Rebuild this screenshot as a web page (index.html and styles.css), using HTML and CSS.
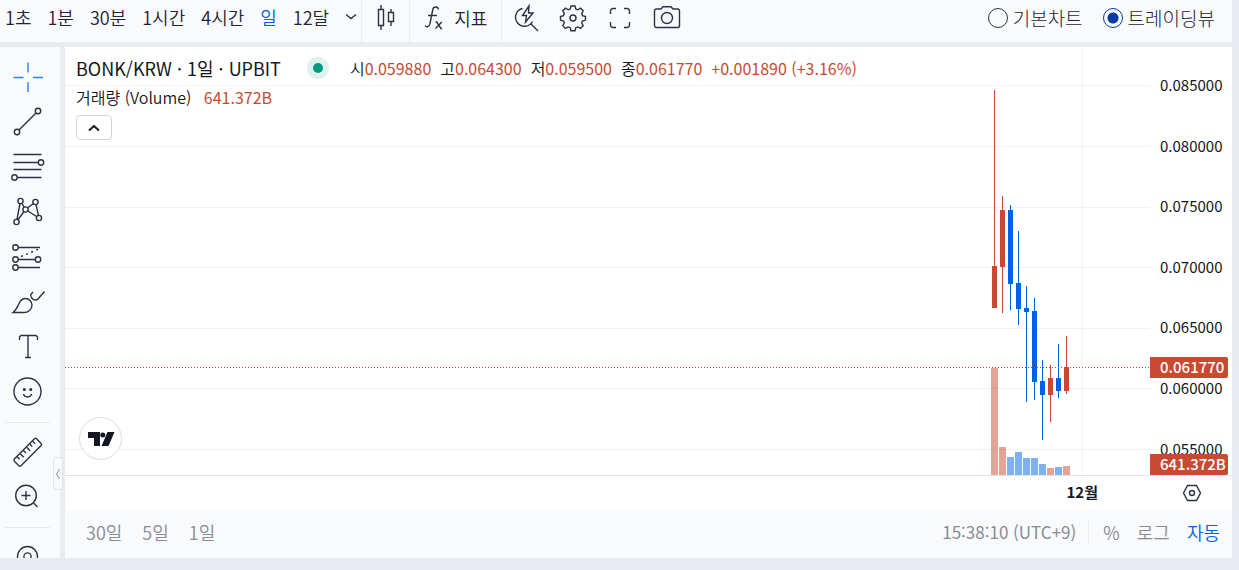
FILE: index.html
```html
<!DOCTYPE html>
<html lang="ko">
<head>
<meta charset="utf-8">
<meta name="viewport" content="width=device-width, initial-scale=1">
<title>BONK/KRW</title>
<link rel="stylesheet" href="styles.css">
</head>
<body>
<div class="app">
  <header class="toolbar">
    <div class="periods">
      <button type="button">1초</button>
      <button type="button">1분</button>
      <button type="button">30분</button>
      <button type="button">1시간</button>
      <button type="button">4시간</button>
      <button type="button" class="active">일</button>
      <button type="button">12달</button>
      <button type="button" class="more" aria-label="기간 더보기"><svg class="icon" width="12" height="8" viewBox="0 0 12 8"><path d="M1 1.500l5 4 5-4"/></svg></button>
    </div>
    <div class="group">
      <button type="button" aria-label="차트 유형"><svg class="icon" width="20" height="28" viewBox="0 0 20 28"><path d="M2.500 5.500h5v16h-5zM5 1v4.500M5 21.500V26M12.500 8.500h5v9h-5zM15 5v3.500M15 17.500V22"/></svg></button>
    </div>
    <div class="group group-wide">
      <button type="button"><svg class="icon" width="20" height="28" viewBox="0 0 20 28"><path d="M14.500 5.500c-.5-3-5-3.500-5.700 0L6 19.500C5.400 23 2 23.800 1.200 21.500M4 11.500h9M11.500 18h1.200l4.200 6.500h1.200M17.800 18l-6.300 6.500"/></svg><span>지표</span></button>
    </div>
    <div class="tools">
      <button type="button" aria-label="빠른 검색"><svg class="icon" width="28" height="28" viewBox="0 0 28 28"><path d="M10.500 4.500a9 9 0 1 0 10 13M19 20l7 7M17 2l-6.500 9.500h4L13.500 18 21 9h-4.500z"/></svg></button>
      <button type="button" aria-label="설정"><svg class="icon" width="28" height="28" viewBox="0 0 28 28"><circle cx="14" cy="14" r="3"/><path d="M12 2h4l.8 3 2 .8 2.800-1.600 2.600 2.700-1.500 2.700.8 2 3 .9v3.600l-3 .9-.8 2 1.500 2.700-2.600 2.700-2.800-1.500-2 .8-.8 3h-4l-.8-3-2-.8-2.800 1.500-2.600-2.700 1.500-2.700-.8-2-3-.9v-3.600l3-.9.8-2-1.500-2.700 2.600-2.700 2.800 1.600 2-.8z"/></svg></button>
      <button type="button" aria-label="전체 화면"><svg class="icon" width="28" height="28" viewBox="0 0 28 28"><path d="M4.500 10V7a2.500 2.500 0 0 1 2.500-2.500h3M18 4.500h3A2.500 2.500 0 0 1 23.500 7v3M23.500 18v3a2.500 2.500 0 0 1-2.500 2.500h-3M10 23.500H7A2.500 2.500 0 0 1 4.500 21v-3"/></svg></button>
      <button type="button" aria-label="스냅샷"><svg class="icon" width="28" height="28" viewBox="0 0 28 28"><path d="M3.500 5H8l2-2.200h8L20 5h4.500A2 2 0 0 1 26.500 7v14.500a2 2 0 0 1-2 2h-21a2 2 0 0 1-2-2V7a2 2 0 0 1 2-2z"/><circle cx="14" cy="14" r="5.500"/></svg></button>
    </div>
    <div class="chart-kind">
      <label><input type="radio" name="kind">기본차트</label>
      <label><input type="radio" name="kind" checked>트레이딩뷰</label>
    </div>
  </header>

  <div class="workspace">
    <nav class="drawing">
      <button type="button" class="active" aria-label="십자선"><svg class="icon" viewBox="0 0 60 45"><path d="M13.500 22.500h10M33 22.500h10M28 7.500v10M28 27v10"/></svg></button>
      <button type="button" aria-label="추세선"><svg class="icon" viewBox="0 0 60 45"><path d="M19 30L36 13"/><circle cx="38" cy="11" r="2.700"/><circle cx="17" cy="32" r="2.700"/></svg></button>
      <button type="button" aria-label="피보나치"><svg class="icon" viewBox="0 0 60 45"><path d="M13.500 9.500h28M13.500 17.500H38M13.500 24.500h28M17 32.500h24.500"/><circle cx="41" cy="17.500" r="2.700"/><circle cx="14.500" cy="32.500" r="2.700"/></svg></button>
      <button type="button" aria-label="패턴"><svg class="icon" viewBox="0 0 60 45"><path d="M20.500 11l-4 21 9-12.500zM25.500 19.500l10-7.500L39 28z"/><g class="knobs"><circle cx="20.500" cy="11" r="2.600"/><circle cx="35.500" cy="12" r="2.600"/><circle cx="25.500" cy="19.500" r="2.600"/><circle cx="16.500" cy="32" r="2.600"/><circle cx="39" cy="28" r="2.600"/></g></svg></button>
      <button type="button" aria-label="예측"><svg class="icon" viewBox="0 0 60 45"><path d="M18 12.500h22M18 24.500h17M18 32.500h22"/><path d="M21 21.500l18-7.500" stroke-dasharray="2 3.500"/><circle cx="15.500" cy="12.500" r="2.700"/><circle cx="15.500" cy="24.500" r="2.700"/><circle cx="38" cy="24.500" r="2.700"/><circle cx="15.500" cy="32.500" r="2.700"/></svg></button>
      <button type="button" aria-label="브러시"><svg class="icon" viewBox="0 0 60 45"><path d="M13 32.500c3.500-2.500 4-5 6-9 1.500-3.500 3.500-5 6.500-5 3.500 0 6.500 3 6.500 6.500 0 4.500-4 7.500-8 7.500zM33 12l-2.200 2.500c-.6 2.500 2 5.500 4.700 5.500 1 0 1.800-.3 2.500-1l6.500-7.500"/></svg></button>
      <button type="button" aria-label="텍스트"><svg class="icon" viewBox="0 0 60 45"><path d="M19.500 15v-3l1.500-1.500h15l1.500 1.500v3M28 10.500v22M25 32.500h6"/></svg></button>
      <button type="button" aria-label="이모지"><svg class="icon" viewBox="0 0 60 45"><circle cx="27.500" cy="21.500" r="13.500"/><path d="M23.500 24c.7 4 7.300 4 8 0"/><path class="dots" d="M24.300 19.500h.1M30.700 19.500h.1"/></svg></button>
      <hr>
      <button type="button" aria-label="측정"><svg class="icon" viewBox="0 0 60 45"><g transform="rotate(-45 27.700 22.300)"><rect x="12" y="17.600" width="31.500" height="9.400" rx="1.500"/><path d="M17 18v3.500M21.500 18v5M26 18v3.500M30.500 18v5M35 18v3.500M39 18v3.500"/></g></svg></button>
      <button type="button" aria-label="확대"><svg class="icon" viewBox="0 0 60 45"><circle cx="26" cy="20.500" r="10.300"/><path d="M21.500 20.500h9M26 16v9M33.500 28l4 4"/></svg></button>
      <hr>
      <button type="button" aria-label="표시"><svg class="icon" viewBox="0 0 60 45"><circle cx="27.500" cy="21.500" r="10"/><circle cx="27.500" cy="21.500" r="3.600"/></svg></button>
    </nav>

    <main class="chart">
      <section class="pane">
        <svg class="plot" role="img" aria-label="BONK/KRW 일봉">
          <path class="grid" d="M0 38.500h4000M0 99.500h4000M0 160.500h4000M0 220.500h4000M0 281.500h4000M0 341.500h4000M0 402.500h4000"/>
          <svg class="series" x="100%">
            <path class="grid" d="M-67.500 0v428"/>
            <path class="volume up" d="M-155.500 428V321M-147.500 428V400M-99.500 428V421M-83.500 428V419"/>
            <path class="volume down" d="M-139.500 428V410M-131.500 428V405M-123.500 428V411M-115.500 428V411M-107.500 428V417M-91.500 428V420"/>
            <path class="wick up" d="M-155.500 43V261M-147.500 149V266M-99.500 318V375M-83.500 289V347"/>
            <path class="wick down" d="M-139.500 158V263M-131.500 184V278M-123.500 239V355M-115.500 251V353M-107.500 313V393M-91.500 297V351"/>
            <path class="body up" d="M-155.500 219V261M-147.500 163V220M-99.500 331V348M-83.500 320V344"/>
            <path class="body down" d="M-139.500 163V237M-131.500 236V262M-123.500 261V265M-115.500 264V335M-107.500 334V348M-91.500 331V344"/>
          </svg>
          <path class="last" d="M0 320.500h4000"/>
        </svg>
        <div class="legend">
          <div class="symbol">
            <h1>BONK/KRW · 1일 · UPBIT</h1>
            <span class="status"></span>
            <div class="ohlc">
              <span>시<b>0.059880</b></span>
              <span>고<b>0.064300</b></span>
              <span>저<b>0.059500</b></span>
              <span>종<b>0.061770</b></span>
              <b>+0.001890 (+3.16%)</b>
            </div>
          </div>
          <div class="study">거래량 (Volume) <b>641.372B</b></div>
          <button type="button" class="collapse" aria-label="지표 접기"><svg class="icon" width="12" height="8" viewBox="0 0 12 8"><path d="M1 6.500l5-4.500 5 4.500"/></svg></button>
        </div>
        <a class="logo" href="#" aria-label="TradingView"><svg width="28" height="16" viewBox="0 0 28 16"><path d="M1 1h12v14H7V7H1zM20.500 1h7l-6 14h-7z"/><circle cx="15.800" cy="4" r="2.500"/></svg></a>
      </section>
      <svg class="prices">
        <text x="10" y="44">0.085000</text>
        <text x="10" y="105">0.080000</text>
        <text x="10" y="165">0.075000</text>
        <text x="10" y="226">0.070000</text>
        <text x="10" y="286">0.065000</text>
        <text x="10" y="347">0.060000</text>
        <text x="10" y="408">0.055000</text>
        <path class="badge" d="M0 310h76a2 2 0 0 1 2 2v17a2 2 0 0 1-2 2H0zM0 407h76a2 2 0 0 1 2 2v17a2 2 0 0 1-2 2H0z"/>
        <text class="on-badge" x="10" y="326">0.061770</text>
        <text class="on-badge" x="10" y="423">641.372B</text>
      </svg>
      <div class="times"><span>12월</span></div>
      <div class="corner"><button type="button" aria-label="축 설정"><svg class="icon" width="20" height="18" viewBox="0 0 20 18"><path d="M5.500 1.500h9L18.500 9l-4 7.500h-9L1.500 9z"/><circle cx="10" cy="9" r="2.500"/></svg></button></div>
      <footer class="footer">
        <div class="ranges">
          <button type="button">30일</button>
          <button type="button">5일</button>
          <button type="button">1일</button>
        </div>
        <button type="button" class="clock">15:38:10 (UTC+9)</button>
        <div class="scale">
          <button type="button">%</button>
          <button type="button">로그</button>
          <button type="button" class="active">자동</button>
        </div>
      </footer>
    </main>
    <button type="button" class="handle" aria-label="도구 모음 숨기기"><svg class="icon" width="6" height="12" viewBox="0 0 6 12"><path d="M4.500 1l-3 5 3 5"/></svg></button>
  </div>
</div>
</body>
</html>
```
FILE: styles.css
```css
* { box-sizing: border-box; }

body {
  margin: 0;
  background: #e8ebf0;
  color: #131722;
  font: 350 18px/24px "Noto Sans CJK KR", sans-serif;
}

button {
  padding: 0;
  border: 0;
  background: none;
  color: inherit;
  font: inherit;
  white-space: nowrap;
  cursor: pointer;
}

b { font-weight: 400; color: #c84a31; }

.icon {
  display: block;
  fill: none;
  stroke: #2a3244;
  stroke-width: 1.4;
}

.app {
  display: flex;
  flex-direction: column;
  gap: 5px;
  height: 100vh;
  padding: 0 7px 12px 0;
}

/* Top toolbar */
.toolbar {
  display: flex;
  align-items: stretch;
  height: 42px;
  background: #f9fafc;
  color: #1e2433;
}

.periods,
.group,
.tools,
.chart-kind {
  display: flex;
  align-items: center;
  padding-bottom: 7px;
}

.periods { gap: 16px; padding-bottom: 9px; padding-left: 5px; }
.periods .active,
.scale .active { color: #0062df; }

.group {
  padding-left: 14px;
  padding-right: 13px;
  border-left: 1px solid #e6e9ee;
}

.periods + .group { margin-left: 4px; }
.group-wide { padding-right: 14px; border-right: 1px solid #e6e9ee; }
.group button { display: flex; align-items: center; gap: 10px; }
.tools { gap: 19px; padding-left: 10px; }

.chart-kind {
  gap: 20px;
  margin-left: auto;
  padding-right: 17px;
  font-size: 19px;
  font-weight: 300;
}

.chart-kind label { display: flex; align-items: center; gap: 5px; white-space: nowrap; }

.chart-kind input {
  appearance: none;
  width: 20px;
  height: 20px;
  margin: 0;
  border: 1px solid #2a3244;
  border-radius: 50%;
}

.chart-kind input:checked {
  border-color: #0a3ba0;
  background: radial-gradient(circle, #0a3ba0 5px, transparent 6px);
}

/* Body */
.workspace {
  position: relative;
  display: flex;
  flex: 1;
  gap: 5px;
  min-height: 0;
}

.drawing {
  flex: 0 0 60px;
  padding-top: 8px;
  overflow: hidden;
  background: #f9fafc;
}

.drawing button { display: block; width: 100%; height: 45px; }
.drawing .active .icon { stroke: #2f80ed; }
.drawing hr { height: 1px; margin: 7px 10px 7px 5px; border: 0; background: #e6e9ee; }
.knobs { fill: #f9fafc; }
.dots { stroke-width: 3; stroke-linecap: round; }

.handle {
  position: absolute;
  top: 410px;
  left: 53px;
  display: grid;
  place-items: center;
  width: 10px;
  height: 33px;
  border: 1px solid #e0e3eb;
  border-radius: 4px;
  background: #f9fafc;
}

.handle .icon { stroke: #8a8e99; stroke-width: 1; }

.chart {
  display: grid;
  flex: 1;
  grid-template: minmax(0, 1fr) 35px 48px / minmax(0, 1fr) 82px;
  min-width: 0;
  background: #fff;
}

.pane { position: relative; }

.plot,
.prices { display: block; width: 100%; height: 100%; }

.series { overflow: visible; }
.grid { stroke: #f1f1f3; }
.last { stroke: #c84a31; stroke-dasharray: 1 2; }
.up { stroke: #c84a31; }
.down { stroke: #0062df; }
.body { stroke-width: 5; }
.volume { stroke-width: 7; stroke-opacity: .5; }

.prices { font-size: 15px; font-weight: 400; fill: #131722; }
.badge { fill: #c84a31; }
.on-badge { fill: #fff; font-weight: 500; }

.legend {
  position: absolute;
  top: 9px;
  left: 11px;
  display: flex;
  flex-direction: column;
  align-items: flex-start;
  font-size: 16px;
  white-space: nowrap;
}

.symbol { display: flex; align-items: center; height: 24px; }
.symbol h1 { margin: 0; font-size: 18px; font-weight: 400; }

.status {
  width: 22px;
  height: 22px;
  margin: 0 21px 0 26px;
  border: 6px solid #def1ee;
  border-radius: 50%;
  background: #089981;
}

.ohlc { display: flex; gap: 9px; }
.study { margin-top: 5px; }
.study b { margin-left: 8px; }

.collapse {
  display: grid;
  place-items: center;
  width: 36px;
  height: 25px;
  margin-top: 6px;
  border: 1px solid #d1d4dc;
  border-radius: 4px;
  background: #fff;
}

.collapse .icon { stroke: #131722; stroke-width: 2; }

.logo {
  position: absolute;
  bottom: 15px;
  left: 14px;
  display: grid;
  place-items: center;
  width: 43px;
  height: 43px;
  border: 1px solid #d9dce5;
  border-radius: 50%;
  background: #fff;
  fill: #131722;
}

.times,
.corner {
  display: flex;
  align-items: center;
  border-top: 1px solid #e0e3eb;
}

.times {
  justify-content: flex-end;
  padding: 0 52px 2px 0;
  font-size: 15px;
  font-weight: 700;
}

.corner { justify-content: center; padding-left: 2px; }

.footer {
  display: flex;
  grid-column: 1 / -1;
  align-items: center;
  padding: 0 12px 5px 21px;
  background: #f9fafc;
  color: #878b94;
}

.ranges { display: flex; gap: 20px; }
.clock { margin-left: auto; font-size: 17px; font-weight: 400; }

.scale {
  display: flex;
  gap: 17px;
  margin-left: 12px;
  padding-left: 14px;
  border-left: 1px solid #e6e9ee;
}
```
